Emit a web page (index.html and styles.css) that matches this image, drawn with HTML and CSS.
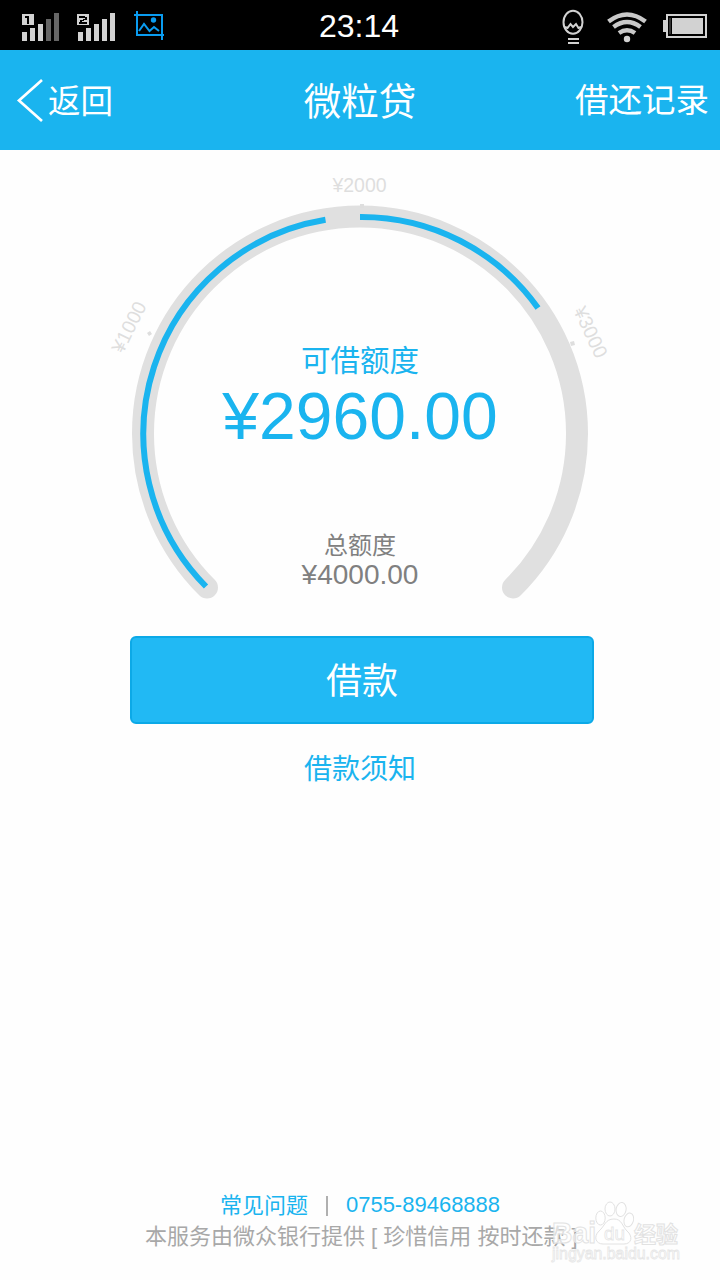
FILE: index.html
```html
<!DOCTYPE html>
<html lang="zh-CN">
<head>
<meta charset="utf-8">
<title>微粒贷</title>
<link rel="stylesheet" href="styles.css">
</head>
<body>
<div class="screen">
  <header class="status">
    <svg class="status-left" width="240" height="50" viewBox="0 0 240 50">
      <g fill="#d2d2d2" shape-rendering="crispEdges">
        <path d="M22 13h12v11H22z"/>
        <path d="M22 31h5v9h-5zM30 27h5v13h-5zM38 23h5v17h-5z"/>
        <path fill="#666" d="M46 18h5v22h-5zM54 12h5v28h-5z"/>
        <path d="M77 13h12v11H77z"/>
        <path d="M78 31h5v9h-5zM86 27h5v13h-5zM94 23h5v17h-5zM102 18h5v22h-5zM110 12h5v28h-5z"/>
        <path fill="#000" d="M25 15h4v8h-2v-6h-2zM79 15h6v1h2v3h-3v1h-2v1h5v2h-8v-2h1v-2h3v-1h2v-1h-6z"/>
      </g>
      <g fill="none" stroke="#0a9cf0" stroke-width="2">
        <path d="M137 10v24h27M134 14h28v25"/>
        <path d="M139 30l5-7 5.500 7 4.500-4 5 4"/>
      </g>
      <circle cx="153.500" cy="19" r="2.700" fill="#0a9cf0"/>
    </svg>
    <time class="clock">23:14</time>
    <svg class="status-right" width="240" height="50" viewBox="480 0 240 50">
      <g fill="none" stroke="#d2d2d2" stroke-width="2">
        <ellipse cx="573" cy="21.300" rx="9.500" ry="11.500"/>
        <path d="M565 26l2.500 1 3-4 2.500 3 3-3 2.500 4 2.500-1M568 38h11M568 42h11"/>
      </g>
      <g fill="none" stroke="#c9c9c9" stroke-width="4.500">
        <path d="M608.500 20.500q18.500-14 37 0M613.500 26q13.500-10 27 0M619 32q8-5.500 16 0"/>
      </g>
      <circle cx="627" cy="38" r="3.200" fill="#d2d2d2"/>
      <g shape-rendering="crispEdges">
        <path d="M667 14h39v22h-39z" fill="none" stroke="#d2d2d2" stroke-width="2"/>
        <path d="M663 19h4v12h-4zM672 17h31v16h-31z" fill="#d2d2d2"/>
        <path d="M669 17h2v16h-2z" fill="#333"/>
      </g>
    </svg>
  </header>
  <nav class="navbar">
    <a class="back">
      <svg width="32" height="50" viewBox="0 0 32 50"><path d="M26 5L3 25.500 26 46" fill="none" stroke="#fff" stroke-width="2.700"/></svg>
      <span class="label">返回</span>
    </a>
    <h1 class="title">微粒贷</h1>
    <a class="records">借还记录</a>
  </nav>
  <main class="content">
    <section class="gauge">
      <svg class="dial" width="720" height="470" viewBox="0 150 720 470">
        <path d="M207 587.500A217 217 0 1 1 513 587.500" fill="none" stroke="#e0e0e0" stroke-width="22" stroke-linecap="round"/>
        <path d="M206 586.500A217 217 0 0 1 325.500 219.800M360 217A217 217 0 0 1 538 308" fill="none" stroke="#1ab4ef" stroke-width="6"/>
        <g fill="#dedede">
          <path d="M360 204h4v4h-4z"/>
          <path d="M147 333l3-2 2 3-3 2zM570 342l4-1 1 4-4 1z"/>
          <g class="tick">
            <text x="359.500" y="192">¥2000</text>
            <text transform="translate(135 330) rotate(-64)">¥1000</text>
            <text transform="translate(584.500 335) rotate(65)">¥3000</text>
          </g>
        </g>
      </svg>
      <div class="figures">
        <div class="available-label">可借额度</div>
        <div class="available">¥2960.00</div>
        <div class="total-label">总额度</div>
        <div class="total">¥4000.00</div>
      </div>
    </section>
    <button class="borrow">借款</button>
    <a class="notice">借款须知</a>
  </main>
  <footer class="footer">
    <div class="links"><a class="faq">常见问题</a><i class="divider"></i><a>0755-89468888</a></div>
    <div class="provider">本服务由微众银行提供 [ 珍惜信用 按时还款 ]</div>
    <svg class="watermark" width="140" height="70" viewBox="545 1198 140 70">
      <g class="mark">
        <text x="552" y="1243" font-size="30" textLength="44" lengthAdjust="spacingAndGlyphs">Bai</text>
        <text x="634" y="1242" font-size="22" textLength="44">经验</text>
        <ellipse cx="600.500" cy="1218" rx="4.700" ry="7"/>
        <ellipse cx="610" cy="1209" rx="5" ry="7"/>
        <ellipse cx="621" cy="1209.500" rx="5" ry="7" transform="rotate(10 621 1210)"/>
        <ellipse cx="628.500" cy="1220" rx="4.700" ry="7" transform="rotate(15 629 1221)"/>
        <path d="M614 1219c-9 0-9 7-15 12-6 6-3 13 4 13h21c8 0 9-8 3-13-5-5-5-12-13-12z"/>
        <text class="thin" x="604" y="1240" font-size="19" textLength="21" lengthAdjust="spacingAndGlyphs">du</text>
        <text class="thin" x="552" y="1259" font-size="16" textLength="128" lengthAdjust="spacingAndGlyphs">jingyan.baidu.com</text>
      </g>
    </svg>
  </footer>
</div>
</body>
</html>
```
FILE: styles.css
```css
* { box-sizing: border-box; }
body {
  margin: 0;
  background: #fefefe;
  font-family: "Liberation Sans", "Noto Sans CJK SC", sans-serif;
}
.screen {
  width: 720px;
  height: 1280px;
  display: flex;
  flex-direction: column;
  overflow: hidden;
}
.status {
  height: 50px;
  background: #000;
  display: grid;
  grid-template-columns: 240px 1fr 240px;
  align-items: center;
}
.clock {
  color: #fff;
  font-size: 32px;
  line-height: 50px;
  padding-top: 1px;
  text-align: center;
  margin-left: -2px;
}
.navbar {
  height: 100px;
  background: #1ab4ef;
  color: #fff;
  display: grid;
  grid-template-columns: 1fr auto 1fr;
  align-items: center;
  padding: 0 11px 0 16px;
  font-size: 33.500px;
}
.back { display: flex; align-items: center; }
.label { font-size: 32.500px; padding-bottom: 4px; }
.title { margin: 0; font-size: 37.500px; font-weight: 400; padding: 0 5px 4px 0; }
.records { text-align: right; padding-bottom: 5px; }
.content {
  flex: 1;
  display: flex;
  flex-direction: column;
  align-items: center;
}
.gauge { display: grid; width: 720px; height: 486px; }
.dial, .figures { grid-area: 1 / 1; }
.tick { font-size: 19.500px; text-anchor: middle; }
.figures { text-align: center; padding-top: 189px; }
.available-label {
  color: #1ab4ef;
  font-size: 29.500px;
  line-height: 44px;
}
.available {
  color: #1ab4ef;
  font-size: 66px;
  line-height: 66px;
}
.total-label {
  color: #808080;
  font-size: 24px;
  line-height: 30px;
  margin-top: 82px;
}
.total {
  color: #808080;
  font-size: 28px;
  line-height: 28px;
}
.borrow {
  width: 464px;
  height: 88px;
  margin-left: 4px;
  padding: 0 0 5px;
  border: 2px solid #0ca9e7;
  border-radius: 6px;
  background: #21b9f4;
  color: #fff;
  font: 400 36px "Liberation Sans", "Noto Sans CJK SC", sans-serif;
}
.notice {
  color: #1ab4ef;
  font-size: 28px;
  line-height: 40px;
  margin-top: 26px;
}
.footer {
  position: relative;
  height: 90px;
  font-size: 22px;
}
.links {
  display: flex;
  justify-content: center;
  align-items: center;
  height: 30px;
  color: #1ab4ef;
}
.faq { padding-bottom: 5px; }
.divider {
  width: 2px;
  height: 20px;
  margin: 2px 18px 0 18px;
  background: #b0b0b0;
}
.provider {
  color: #a8a8a8;
  line-height: 34px;
  padding-left: 145px;
  white-space: nowrap;
}
.watermark { position: absolute; left: 545px; top: 8px; }
.mark {
  fill: #fff;
  fill-opacity: 0.65;
  stroke: #e2e2e2;
  stroke-width: 1;
  font-weight: bold;
}
.thin { stroke: #e6e6e6; stroke-width: 0.8; font-weight: normal; }
```
